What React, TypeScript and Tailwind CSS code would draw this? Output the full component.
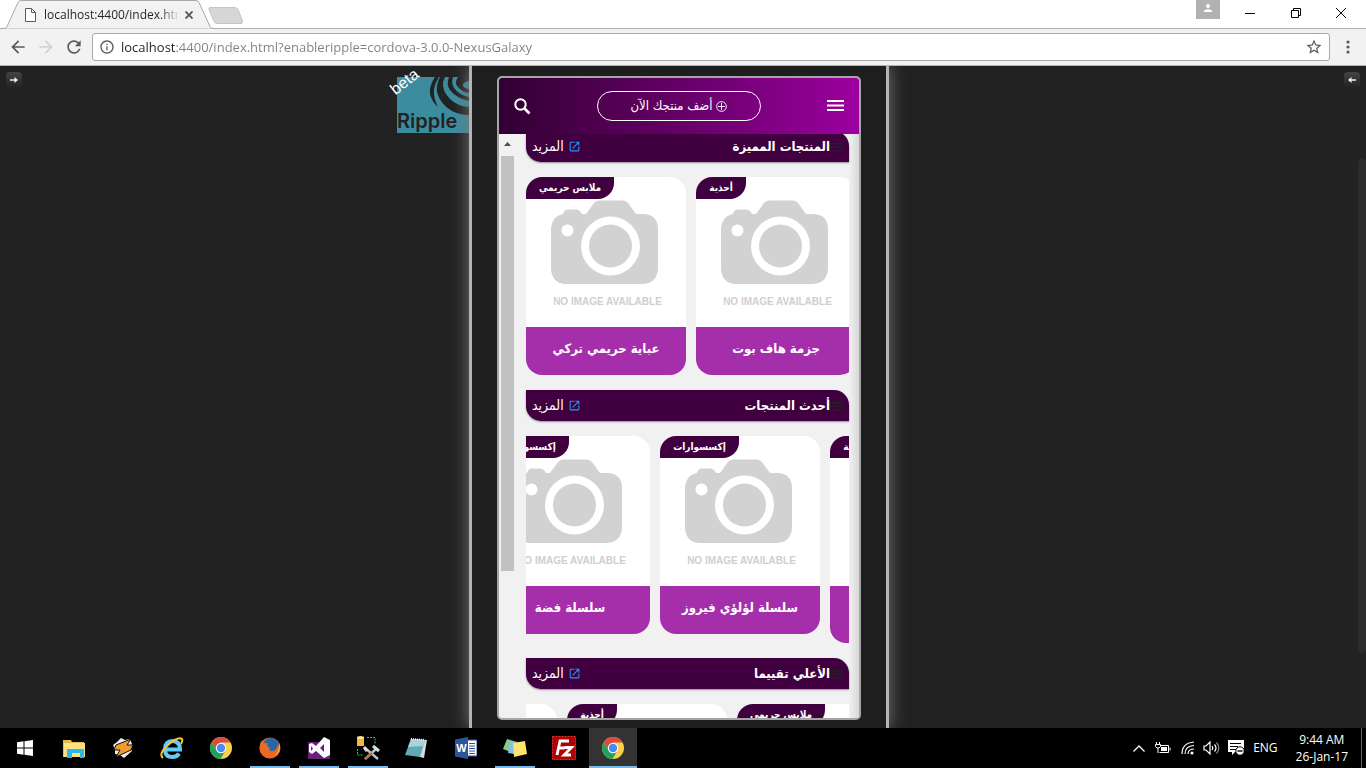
import React from 'react';
import { MdArrowBack, MdArrowForward, MdRefresh, MdStarBorder, MdOpenInNew, MdInfoOutline } from 'react-icons/md';

type Product = { tag: string; name: string; tagWidth: string; tall?: boolean };

const ui = "font-['Open_Sans','Noto_Sans',sans-serif]";

function Camera() {
  return (
    <svg viewBox="0 0 160 150" className="block h-[150px] w-[160px]" aria-hidden="true">
      <path
        fill="#d2d2d2"
        d="M60 37 L68 26 Q70 23.500 73 23.500 L97 23.500 Q100 23.500 102 26 L110 37 H118 Q132 38 132 52 V92 Q131 106 117 107 H39 Q26 106 25 92 V52 Q26 39 37 37 Q38 32.500 42 32.500 H50 Q54 32.500 56 37 Z"
      />
      <circle cx="84.500" cy="69" r="29.500" fill="#fff" />
      <circle cx="84.500" cy="69" r="21.500" fill="#d2d2d2" />
      <circle cx="41.500" cy="53.500" r="6" fill="#fff" />
      <text x="81.500" y="128" textAnchor="middle" fontFamily="Liberation Sans, sans-serif" fontSize="10" fontWeight="700" fill="#cfcfcf">
        NO IMAGE AVAILABLE
      </text>
    </svg>
  );
}

function Card({ p }: { p: Product }) {
  return (
    <article className={`relative w-[160px] shrink-0 overflow-hidden rounded-[16px] bg-white ${p.tall ? 'h-[207px]' : 'h-[198px]'}`}>
      <Camera />
      <span dir="rtl" className={`absolute left-0 top-0 flex h-[22px] items-center justify-center whitespace-nowrap rounded-br-[16px] bg-[#400040] pb-0.5 text-[10px] font-bold text-white ${p.tagWidth}`}>
        {p.tag}
      </span>
      <h3 dir="rtl" className="flex h-full items-start justify-center whitespace-nowrap bg-[#a52fab] pt-3 text-[13px] font-bold leading-5 text-white">
        {p.name}
      </h3>
    </article>
  );
}

function Section({ title, items, shift }: { title: string; items: Product[]; shift: string }) {
  return (
    <section className="mb-[15px]">
      <div dir="rtl" className="flex h-[31px] items-center justify-between rounded-bl-[15px] rounded-tr-[15px] bg-[#400040] pl-[6px] pr-[5px] text-white shadow-[0_1px_2px_rgba(0,0,0,0.4)]">
        <h2 className="flex items-center text-[13px] font-bold">
          <svg viewBox="0 0 14 10" className="h-[10px] w-[14px]" fill="none" stroke="#262026" aria-hidden="true">
            <path d="M.5 1.500h12v4H.500zM4.500 1.500v4M8.500 1.500v4M0 9h14" />
          </svg>
          {title}
        </h2>
        <a href="#more" className="flex items-center gap-1 text-[14px]">
          <MdOpenInNew className="size-[13px] text-[#2196f3]" aria-hidden="true" />
          المزيد
        </a>
      </div>
      <div className="mt-[15px] overflow-hidden">
        <div className={`flex items-start gap-[10px] ${shift}`}>
          {items.map((p, i) => <Card key={i} p={p} />)}
        </div>
      </div>
    </section>
  );
}

const abaya: Product = { tag: 'ملابس حريمي', name: 'عباية حريمي تركي', tagWidth: 'w-[88px]' };
const boot: Product = { tag: 'أحذية', name: 'جزمة هاف بوت', tagWidth: 'w-[50px]' };
const silver: Product = { tag: 'إكسسوارات', name: 'سلسلة فضة', tagWidth: 'w-[79px]' };
const pearl: Product = { tag: 'إكسسوارات', name: 'سلسلة لؤلؤي فيروز', tagWidth: 'w-[79px]' };

function Browser() {
  return (
    <header className={`shrink-0 ${ui}`}>
      <div className="flex h-7 items-start justify-between bg-white">
        <div className="flex items-start">
          <div className="relative h-[29px] w-[214px]">
            <svg viewBox="0 0 214 29" className="absolute inset-0 h-[29px] w-[214px]" aria-hidden="true">
              <path d="M0 28.500 H4 Q6 28.500 7 26.500 L18 2.500 Q19 .5 21 .5 H196 Q198 .5 199 2.500 L210 26.500 Q211 28.500 214 28.500" fill="#f2f2f2" stroke="#a9a9a9" />
            </svg>
            <div className="relative flex h-[29px] items-center pl-[25px]">
              <svg viewBox="0 0 11 14" className="h-[14px] w-[11px]" fill="#fff" stroke="#5a5a5a" aria-hidden="true">
                <path d="M.5.500h6l4 4v9H.500zM6.500.500v4h4" />
              </svg>
              <span className="ml-2 w-[133px] overflow-hidden whitespace-nowrap bg-[linear-gradient(to_right,#222_116px,transparent_136px)] bg-clip-text text-[12px] text-transparent">
                localhost:4400/index.html
              </span>
              <button aria-label="Close tab" className="ml-2">
                <svg viewBox="0 0 8 8" className="size-2" stroke="#555" strokeWidth="1.800" aria-hidden="true"><path d="M.5.500l7 7M7.500.500l-7 7" /></svg>
              </button>
            </div>
          </div>
          <button aria-label="New tab" className="-ml-1.5 mt-[7px]">
            <svg viewBox="0 0 35 17" className="block h-[17px] w-[35px]" aria-hidden="true">
              <path d="M2 .5H27Q29 .5 30 2.500L34.500 14Q35 16.500 33 16.500H9Q7 16.500 6 14.500L1 2.500Q.5.500 2 .5Z" fill="#d6d6d6" stroke="#c4c4c4" />
            </svg>
          </button>
        </div>
        <div className="flex items-start">
          <button aria-label="Profile" className="flex h-[19px] w-6 justify-center bg-[#b1b1b1] pt-1">
            <svg viewBox="0 0 8 8" className="size-2" fill="#fff" aria-hidden="true"><circle cx="4" cy="2" r="2" /><path d="M0 8V6.500Q1.500 5 4 5T8 6.500V8z" /></svg>
          </button>
          <button aria-label="Minimize" className="ml-[7px] grid h-[26px] w-[46px] place-items-center">
            <svg viewBox="0 0 10 10" className="size-[10px]" stroke="#000" aria-hidden="true"><path d="M0 5.500h10" /></svg>
          </button>
          <button aria-label="Restore" className="grid h-[26px] w-[45px] place-items-center">
            <svg viewBox="0 0 10 10" className="size-[10px]" stroke="#000" fill="none" aria-hidden="true"><path d="M.5 2.500h7v7h-7zM2.500 2.500v-2h7v7h-2" /></svg>
          </button>
          <button aria-label="Close" className="mr-0.5 grid h-[26px] w-[46px] place-items-center">
            <svg viewBox="0 0 10 10" className="size-[10px]" stroke="#000" aria-hidden="true"><path d="M0 0l10 10M10 0L0 10" /></svg>
          </button>
        </div>
      </div>
      <div className="flex h-[38px] items-center border-b border-t border-b-[#b0b0b0] border-t-[#b0b0b0] bg-[#f2f2f2] pl-2 pr-4">
        <div className="flex items-center gap-2 pr-2 text-[#5a5a5a]">
          <button aria-label="Back"><MdArrowBack className="size-5" /></button>
          <button aria-label="Forward" className="text-[#d2d2d2]"><MdArrowForward className="size-5" /></button>
          <button aria-label="Reload"><MdRefresh className="size-5" /></button>
        </div>
        <div className="flex h-7 flex-1 items-center rounded-[3px] border border-[#a9a9a9] bg-white px-[6px]">
          <MdInfoOutline className="size-4 text-[#5a5a5a]" aria-hidden="true" />
          <input
            aria-label="Address"
            defaultValue="localhost:4400/index.html?enableripple=cordova-3.0.0-NexusGalaxy"
            className="ml-[6px] h-6 min-w-0 flex-1 bg-[linear-gradient(to_right,#222_55px,#808080_55px)] bg-clip-text text-[13px] text-transparent outline-none"
          />
          <button aria-label="Bookmark"><MdStarBorder className="size-[18px] text-[#5a5a5a]" /></button>
        </div>
        <button aria-label="Menu" className="ml-4">
          <svg viewBox="0 0 4 14" className="block h-[14px] w-1" fill="#5a5a5a" aria-hidden="true"><circle cx="2" cy="2" r="1.600" /><circle cx="2" cy="7" r="1.600" /><circle cx="2" cy="12" r="1.600" /></svg>
        </button>
      </div>
    </header>
  );
}

function PanelArrow({ flip }: { flip?: boolean }) {
  return (
    <button aria-label={flip ? 'Open right panel' : 'Open left panel'} className="grid size-4 place-items-center rounded-[4px] bg-linear-to-b from-[#444] to-[#222]">
      <svg viewBox="0 0 8 6" className={`h-[6px] w-2 ${flip ? '-scale-x-100' : ''}`} aria-hidden="true"><path d="M0 2.200h4.500V0L8 3 4.500 6V3.800H0z" fill="#eee" /></svg>
    </button>
  );
}

function RippleLogo() {
  return (
    <div className="relative h-14 w-[72px] bg-[#3c8ca0]">
      <svg viewBox="0 0 72 56" className="absolute inset-0 h-14 w-[72px]" fill="#222" aria-hidden="true">
        <path d="M38 0Q32 9 33 17Q35 25 41 30Q36 20 37 12Q38 6 42 0Z" />
        <path d="M43 0Q39 8 40 15Q43 27 55 34Q63 38 72 38V30Q60 29 53 22Q45 14 46 5L48 0Z" />
        <path d="M52 0Q49 8 53 13Q59 21 72 24V20Q62 18 57 11Q54 6 56 0Z" />
        <path d="M61 0Q57 6 61 10Q65 15 72 16V12Q66 11 66 8Q66 5 72 4V0Z" />
      </svg>
      <span className="absolute bottom-0 left-0 font-['Inter',sans-serif] text-[20px] font-semibold leading-6 text-[#222]">Ripple</span>
      <span className="absolute -left-2 -top-[5px] -rotate-[38deg] font-['Liberation_Sans',sans-serif] text-[16px] leading-5 text-white">beta</span>
    </div>
  );
}

function Phone() {
  return (
    <div className="flex h-[644px] w-[364px] flex-col overflow-hidden rounded-[5px] border-2 border-[#a5a5a5] bg-[#f1f1f1] font-['DejaVu_Sans_Condensed','DejaVu_Sans',sans-serif]">
      <header className="z-10 flex h-14 shrink-0 items-center justify-between bg-linear-to-r from-[#330033] to-[#9c00a0] px-[15px] text-white">
        <button aria-label="Search">
          <svg viewBox="0 0 17 17" className="size-[17px]" fill="none" stroke="#fff" strokeWidth="2" aria-hidden="true"><circle cx="6.500" cy="6.500" r="5.200" /><path d="M10.500 10.500l5 5" strokeWidth="2.600" /></svg>
        </button>
        <button dir="rtl" className="flex h-[30px] w-[164px] items-center justify-center gap-1 rounded-full border border-white text-[13px]">
          <svg viewBox="0 0 12 12" className="size-[11px]" fill="none" stroke="#fff" aria-hidden="true"><circle cx="6" cy="6" r="5.300" /><path d="M6 2v8M2 6h8" /></svg>
          أضف منتجك الآن
        </button>
        <button aria-label="Menu">
          <svg viewBox="0 0 17 12" className="h-3 w-[17px]" stroke="#fff" strokeWidth="2" aria-hidden="true"><path d="M0 1h17M0 5.500h17M0 10h17" /></svg>
        </button>
      </header>
      <div className="flex min-h-0 flex-1">
        <div className="flex w-[17px] shrink-0 flex-col items-center" aria-hidden="true">
          <svg viewBox="0 0 7 4" className="mb-[10px] mt-2 h-1 w-[7px]" fill="#505050"><path d="M0 4L3.500 0 7 4z" /></svg>
          <div className="h-[415px] w-[13px] bg-[#c1c1c1]" />
        </div>
        <main className="min-w-0 flex-1 overflow-hidden bg-[linear-gradient(to_right,transparent_calc(100%-10px),#d8d8d8)] px-[10px]">
          <div className="-mt-[3px]">
            <Section title="المنتجات المميزة" shift="" items={[abaya, boot]} />
            <Section title="أحدث المنتجات" shift="-ml-9" items={[silver, pearl, { ...boot, tall: true }]} />
            <Section title="الأعلي تقييما" shift="-ml-[129px]" items={[pearl, boot, abaya]} />
          </div>
        </main>
      </div>
    </div>
  );
}

function ChromeIcon() {
  return (
    <svg viewBox="0 0 22 22" className="size-[22px]" aria-hidden="true">
      <circle cx="11" cy="11" r="11" fill="#fcd04b" />
      <path d="M1.500 5.500A11 11 0 0 1 20.500 5.500H11L7 13z" fill="#dc4b3e" />
      <path d="M1.500 5.500A11 11 0 0 0 10.500 22L15.500 13.500H7z" fill="#1da261" />
      <circle cx="11" cy="11" r="5.200" fill="#fff" /><circle cx="11" cy="11" r="4.200" fill="#4a8af4" />
    </svg>
  );
}

const apps: { name: string; state?: 'open' | 'active'; icon: React.ReactNode }[] = [
  { name: 'Start', icon: <svg viewBox="0 0 16 16" className="size-4" fill="#fff"><path d="M0 2.300l6.500-1v6.200H0zM7.500 1.200L16 0v7.500H7.500zM0 8.500h6.500v6.200l-6.500-1zM7.500 8.500H16V16l-8.500-1.200z" /></svg> },
  { name: 'File Explorer', icon: <svg viewBox="0 0 22 19" className="h-[19px] w-[22px]"><path d="M0 1h8l1 2h12v15H0z" fill="#e8b84a" /><path d="M1 4h21v14H1z" fill="#fbdf83" /><path d="M4 19v-9h17v9h-4v-5H9v5z" fill="#28b7ee" /></svg> },
  { name: 'Winamp', icon: <svg viewBox="0 0 22 22" className="size-[22px]"><path d="M9 1l4 2 5-1 2 5-2 4 2 3-8 7-4-3-5-1 0-5-2-4 4-3z" fill="#eee" /><path d="M19 2L4 8l-2 5 6 0-4 7L19 13l2-5-6 0z" fill="#f29a2e" stroke="#111" strokeWidth="1" /></svg> },
  { name: 'Internet Explorer', icon: <svg viewBox="0 0 24 22" className="h-[22px] w-6" fill="none"><path d="M5 12.500h15Q20 4 12.500 4T5 12.500Q5 20 12.500 20Q17 20 19 16.500" stroke="#62ccf5" strokeWidth="4" /><path d="M3 21Q-2 17 8 8Q18-1 22 2Q23 3 21 7" stroke="#f6c735" strokeWidth="2" /></svg> },
  { name: 'Chrome', icon: <ChromeIcon /> },
  { name: 'Firefox', state: 'open', icon: <svg viewBox="0 0 22 22" className="size-[22px]"><circle cx="11" cy="11" r="10.500" fill="#e8622a" /><circle cx="12" cy="9" r="8" fill="#2866a8" /><path d="M2 4Q5 7 9 6Q7 9 11 11Q9 14 14 14Q18 13 19 7Q22 11 20 15Q16 22 9 21Q-1 18 1 8z" fill="#ea6a24" /><path d="M20 6q3 8-4 13q5-6 4-13z" fill="#fbc02d" /></svg> },
  { name: 'Visual Studio', state: 'open', icon: <svg viewBox="0 0 22 22" className="size-[22px]"><path d="M0 5H22V22H0z" fill="#68217a" /><path d="M16 0l6 3v15l-6 3-8-7-4 3-3-2V7l3-1 4 3zM16 7l-4 4 4 4zM3 9v5l2-2.500z" fill="#fff" fillRule="evenodd" /></svg> },
  { name: 'SQL Server Tools', state: 'open', icon: <svg viewBox="0 0 24 24" className="size-6"><path d="M1 1h7v9H1z" fill="#f0b93a" /><ellipse cx="4.500" cy="1.500" rx="3.500" ry="1.500" fill="#ffe08a" /><path d="M11 1.500h8v7M1.500 13v6h6" stroke="#39c639" strokeDasharray="2 1" fill="none" /><path d="M9 12l13 11M20 13L9 23" stroke="#b9c4cc" strokeWidth="2.400" /><path d="M17 10l6 5M8 11l3 4" stroke="#ddd" strokeWidth="3" /><path d="M16 17l-7 6" stroke="#a87534" strokeWidth="2.400" /></svg> },
  { name: 'Notepad', icon: <svg viewBox="0 0 24 22" className="h-[22px] w-6"><path d="M7 2l15 1-3 18-4-1z" fill="#d7dadb" /><path d="M6 2l14 1-5 17-15-2z" fill="#62a9b8" /><path d="M6 2l14 1-2 6L3 10z" fill="#a9d3da" /><path d="M6 2l14 1" stroke="#eee" strokeWidth="2" strokeDasharray="1 1" /></svg> },
  { name: 'Word', icon: <svg viewBox="0 0 22 22" className="size-[22px]"><path d="M12 3h10v16H12z" fill="#fff" stroke="#2b579a" /><path d="M14 6.500h6M14 9h6M14 11.500h6M14 14h6M14 16.500h6" stroke="#2b579a" /><path d="M0 2.500L13 0v22L0 19.500z" fill="#2b579a" /><text x="6.500" y="15" textAnchor="middle" fontSize="11" fontWeight="700" fontFamily="Liberation Sans" fill="#fff">W</text></svg> },
  { name: 'Sticky Notes', state: 'open', icon: <svg viewBox="0 0 24 22" className="h-[22px] w-6"><path d="M4 2l10 3-4 11L0 12z" fill="#8bc98b" /><path d="M7 5l11 1-1 12-12-2z" fill="#7fc0e8" /><path d="M10 6l12-2 2 13-13 3z" fill="#fbe36d" /></svg> },
  { name: 'FileZilla', icon: <svg viewBox="0 0 24 24" className="size-6"><path d="M.5.500h23v23H.500z" fill="#b30000" stroke="#d33" strokeDasharray="2 1" /><path d="M5 19L8 5h9M6.500 12h6M12.500 11.500h7L12 19h7" stroke="#fff" strokeWidth="2.800" fill="none" /></svg> },
  { name: 'Chrome window', state: 'active', icon: <ChromeIcon /> },
];

function Taskbar() {
  return (
    <footer className={`flex h-10 shrink-0 justify-between bg-black text-white ${ui}`}>
      <nav className="flex gap-px pl-px">
        {apps.map((a) => (
          <button key={a.name} aria-label={a.name} className={`relative grid w-12 place-items-center ${a.state === 'active' ? 'bg-[#333]' : ''}`}>
            {a.icon}
            {a.state && <span className={`absolute bottom-0 h-[2px] bg-[#76b9ed] ${a.state === 'active' ? 'inset-x-0' : 'inset-x-1'}`} />}
          </button>
        ))}
      </nav>
      <div className="flex items-center">
        <div className="flex items-center gap-2">
          <svg viewBox="0 0 12 7" className="mr-[2px] h-[7px] w-3" fill="none" stroke="#fff" strokeWidth="1.300" aria-label="Hidden icons"><path d="M.5 6.500L6 1l5.500 5.500" /></svg>
          <svg viewBox="0 0 16 12" className="h-3 w-4" fill="none" stroke="#fff" aria-label="Battery"><path d="M5.500 3.500h8v7h-9M15 5.500v3M1.500 0v2.500M4.500 0v2.500M.5 2.500h5v2l-1.500 1.500h-2L.500 4.500zM3 6v5" /><path d="M6 5h6v4H6z" fill="#fff" stroke="none" /></svg>
          <svg viewBox="0 0 14 14" className="ml-[2px] h-[14px] w-[14px]" fill="none" stroke="#fff" strokeWidth="1.200" aria-label="Wi-Fi"><path d="M1 13Q1 2 13 1M4 13Q4 5 13 4.500M7 13Q7 8 13 8" /><circle cx="11" cy="12" r="1.600" fill="#fff" stroke="none" /></svg>
          <svg viewBox="0 0 17 14" className="h-[14px] w-[17px]" fill="none" stroke="#fff" strokeWidth="1.200" aria-label="Volume"><path d="M1 5h2l4-4v12l-4-4H1zM9 5q1.500 2 0 4M11.500 3.500q3 3.500 0 7" /><path d="M13.500 1.500q4.500 5.500 0 11" stroke="#888" /></svg>
          <svg viewBox="0 0 16 16" className="size-4" aria-label="Notifications"><path d="M0 0h16v12H7l-3 3v-3H0z" fill="#fff" /><path d="M2 3.500h11M2 6.500h8M2 9.500h6" stroke="#000" /><circle cx="12" cy="11" r="4.200" fill="#fff" stroke="#000" /><path d="M9.500 11h5" stroke="#000" strokeWidth="1.400" /></svg>
          <span className="ml-px text-[12px]">ENG</span>
        </div>
        <time className="ml-[18px] text-center text-[12px] leading-[17px]">9:44 AM<br />26-Jan-17</time>
        <span className="ml-[13px] mr-1 h-10 w-px bg-[#666]" />
      </div>
    </footer>
  );
}

export default function App() {
  return (
    <div className="flex h-screen w-full flex-col overflow-hidden bg-[#222]">
      <Browser />
      <div className="flex min-h-0 flex-1 overflow-hidden">
        <div className="flex flex-1 items-start justify-between pl-[6px] pt-[6px]">
          <PanelArrow />
          <div className="pt-[5px]"><RippleLogo /></div>
        </div>
        <div className="relative flex w-[420px] shrink-0 justify-center border-x-[3px] border-[#b4b4b4] bg-[#1e1e1e] pt-[10px] shadow-[0_0_16px_#777]">
          <Phone />
        </div>
        <div className="flex flex-1 items-start justify-end pl-[6px] pt-[6px]">
          <div className="-mr-0.5"><PanelArrow flip /></div>
        </div>
        <div className="flex w-2 flex-col pt-[92px]" aria-hidden="true">
          <div className="h-[495px] rounded-full bg-[#2b2b2b]" />
        </div>
      </div>
      <Taskbar />
    </div>
  );
}
